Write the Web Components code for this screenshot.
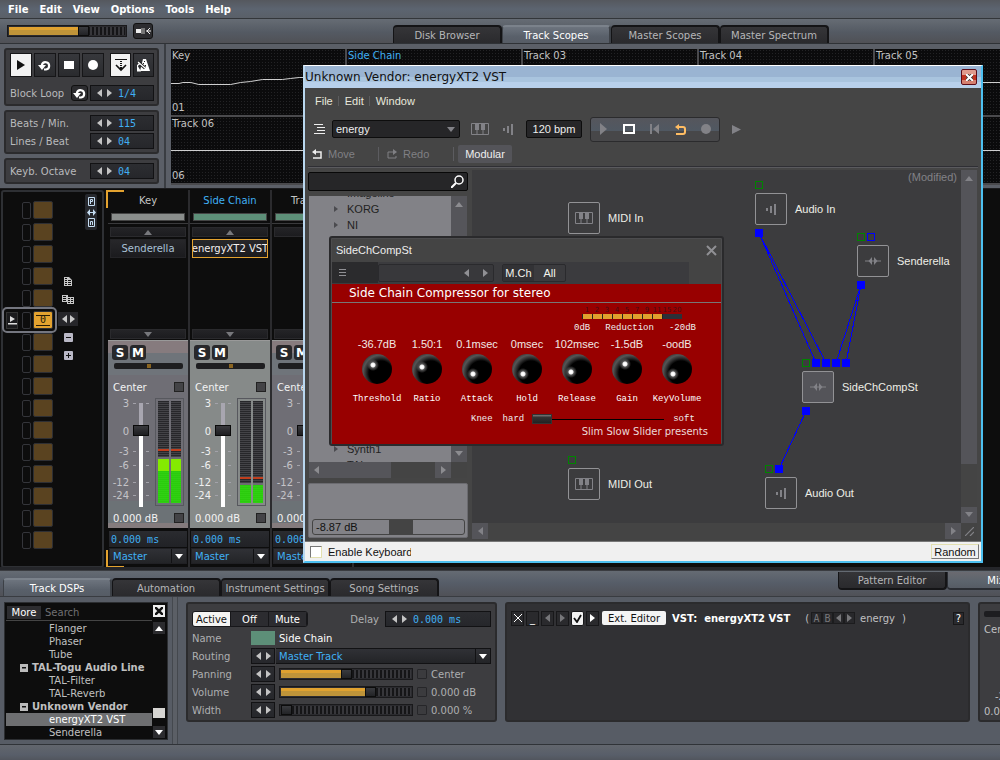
<!DOCTYPE html>
<html lang="en">
<head>
<meta charset="utf-8">
<title>Renoise</title>
<style>
  html, body { margin: 0; height: 100%; background: #545a62; overflow: hidden; }
</style>
</head>
<body>
<rn-app></rn-app>
<script>
const BASE = `
  :host { display: block; box-sizing: border-box; }
  * { box-sizing: border-box; }
  button, input, select { font: inherit; color: inherit; margin: 0; padding: 0; border: 0; background: none; border-radius: 0; min-width: 0; }
  button { display: flex; align-items: center; justify-content: center; white-space: nowrap; }
  select, input[type=range], input[type=checkbox] { appearance: none; -webkit-appearance: none; }
  ul { list-style: none; margin: 0; padding: 0; }
  svg { display: block; flex: none; }
  .row { display: flex; align-items: center; }
`;

function define(name, css, render) {
  customElements.define(name, class extends HTMLElement {
    constructor() { super(); this.attachShadow({ mode: 'open' }); }
    connectedCallback() {
      const a = (key, fallback = '') => this.getAttribute(key) ?? fallback;
      this.shadowRoot.innerHTML = `<style>${BASE}${css}</style>${render(a, this)}`;
    }
  });
}

const svg = (w, h, body, extra = '') =>
  `<svg width="${w}" height="${h}" viewBox="0 0 ${w} ${h}" fill="currentColor" aria-hidden="true" ${extra}>${body}</svg>`;

const ICON = {
  left: svg(5, 8, '<path d="M5 0v8L0 4z"/>'),
  right: svg(5, 8, '<path d="M0 0v8l5-4z"/>'),
  up: svg(8, 5, '<path d="M0 5h8L4 0z"/>'),
  down: svg(8, 5, '<path d="M0 0h8L4 5z"/>'),
  play: svg(8, 10, '<path d="M0 0v10l8-5z"/>'),
  loop: svg(14, 13, '<path d="M4 7V5.500A3.700 3.700 0 1 1 8 10.500H6" fill="none" stroke="currentColor" stroke-width="2.200"/><path d="M0 6h8L4 11z"/>'),
  stop: svg(10, 8, '<path d="M0 0h10v8H0z"/>'),
  rec: svg(10, 10, '<circle cx="5" cy="5" r="5"/>'),
  follow: svg(12, 13, '<path d="M0 0h12v1H0zM5 2h2v1H5zM5 4h2v1H5zM5 6h2v1H5z"/><path d="M1 6l5 5 5-5" fill="none" stroke="currentColor" stroke-width="1.600"/><path d="M5 8h2v3H5z"/>'),
  metro: svg(13, 13, '<path d="M6 0h3l4 12H3z"/><path d="M7 2h1v1H7zM6 4h1v1H6zM8 6h1v1H8zM7 8h1v1H7zM5 7h1v1H5z" fill="#222"/><path d="M1 3l7 6" stroke="#222" stroke-width="3"/><path d="M1 3l7 6M0 7l3-3M0 12V7l3 5z" stroke="currentColor" stroke-width="1.200"/>'),
  plug: svg(15, 8, '<path d="M0 2h5v4H0z"/><path d="M5 1h4v6H5z" fill="#777"/><path d="M14 1l-3 3 3 3M10 4h5" fill="none" stroke="currentColor"/>'),
  doc: svg(8, 9, '<path d="M0 0h5l3 3v6H0z"/><path d="M1 2h2M1 4h2M4 4h3M1 6h2M4 6h3M1 8h2M4 8h3" transform="translate(0 -.5)" stroke="#111" />'),
  docs: svg(12, 9, '<path d="M0 0h6v7H0zM5 2h7v7H5z"/><path d="M1 2h3M1 4h3M1 6h3M6 4h2M9 4h2M6 6h2M9 6h2M6 8h2M9 8h2" transform="translate(0 -.5)" stroke="#111"/>'),
  list: svg(11, 10, '<path d="M0 0h9v1H0zM3 3h8v1H3zM3 6h8v1H3zM0 9h11v1H0z"/>'),
  piano: svg(18, 12, '<path d="M.5.5h17v11H.500zM6 6v6M12 6v6" fill="none" stroke="currentColor"/><path d="M4 0h4v7H4zM10 0h4v7h-4z"/>'),
  bars: svg(11, 11, '<path d="M0 4h2v3H0zM4 2h2v7H4zM8 0h2v11H8z"/>'),
  fx: svg(16, 8, '<path d="M0 3.500h16v1H0z"/><path d="M7 0v8L3.500 4zM9 0v8l3.500-4z"/>'),
  undo: svg(10, 10, '<path d="M3 3h6v6H1" fill="none" stroke="currentColor" stroke-width="1.500"/><path d="M0 3l4-3v6z"/>'),
  redo: svg(10, 10, '<path d="M7 3H1v6h8V7" fill="none" stroke="currentColor"/><path d="M10 3L6 0v6z"/>'),
  lens: svg(13, 13, '<circle cx="8" cy="5" r="4" fill="none" stroke="currentColor" stroke-width="1.500"/><path d="M5 8l-5 5" stroke="currentColor" stroke-width="2"/>'),
};

/* ---------- shared controls ---------- */

define('rn-stepper', `
  :host { display: flex; align-items: center; height: 16px; background: linear-gradient(#2c2d31, #26272b); border: 1px solid #121214; color: #c4c4c4; }
  button { width: 10px; height: 14px; }
  .pair { display: flex; padding: 0 4px 0 3px; }
  input { flex: 1; width: 0; height: 14px; color: #40b0f4; font-family: "DejaVu Sans Mono", monospace; }
  :host([bare]) { width: 24px; flex: none; padding: 0; }
  :host([bare]) .pair { padding: 0 1px; }
`, a => `<span class="pair"><button aria-label="Previous">${ICON.left}</button><button aria-label="Next">${ICON.right}</button></span>${
  a('value') ? `<input type="text" value="${a('value')}" aria-label="${a('label')}">` : ''}`);

define('rn-slider', `
  :host { display: flex; height: 12px; border: 1px solid #19191b; background: #2b2b2f; padding: 1px; }
  input { width: 100%; height: 8px; background:
      linear-gradient(#e0a230 0 3px, #bf9439 3px) 0 0 / var(--fill) 8px no-repeat,
      repeating-linear-gradient(90deg, #151517 0 1px, #37373b 1px 3px, #151517 3px 4px); }
  input::-webkit-slider-thumb { -webkit-appearance: none; width: 11px; height: 10px; background: linear-gradient(#3a3b3f, #222326); border: 1px solid #0c0c0c; }
`, a => `<input type="range" value="${a('value', 0)}" aria-label="${a('label')}" style="--fill:${a('value', 0)}%">`);

define('rn-tabs', `
  :host { display: flex; overflow: hidden; }
  button { flex: none; width: 109px; height: 18px; color: #b5b6b8; background: linear-gradient(#353538, #2a2a2d); border: 1px solid #141416; border-width: 2px 2px 0 1px; border-radius: 4px 4px 0 0; }
  button[aria-selected=true] { color: #fff; background: linear-gradient(#6d747e, #59606a 60%, #565c65); border-color: #3c4046; border-top-color: #7b828b; }
  :host([bottom]) button { border-width: 0 2px 2px 1px; border-radius: 0 0 4px 4px; }
  :host([bottom]) button[aria-selected=true] { background: linear-gradient(#6a6a70, #5c646d 60%, #565c65); border-color: #2a2d33; }
`, a => a('items').split('|').map((t, i) => `<button role="tab" aria-selected="${i == a('active')}">${t}</button>`).join(''));

define('rn-panel', `
  :host { background: #3d3d40; border: 2px solid #2b2b2d; border-radius: 3px; min-width: 0; }
`, () => `<slot></slot>`);

define('rn-select', `
  :host { display: grid; align-items: center; height: 16px; color: #40b0f4; background: linear-gradient(#303136, #232427); border: 1px solid #121214; }
  select { grid-area: 1 / 1; width: 100%; height: 14px; padding-left: 3px; outline: none; }
  span { grid-area: 1 / 1; justify-self: end; width: 15px; height: 14px; display: flex; align-items: center; justify-content: center; border-left: 1px solid #121214; color: #fff; pointer-events: none; }
`, a => `<select aria-label="${a('label')}"><option>${a('value')}</option></select><span>${ICON.down}</span>`);

/* ---------- top ---------- */

define('rn-menubar', `
  :host { display: flex; gap: 11px; align-items: center; height: 19px; padding-left: 8px; font-weight: bold; color: #fff;
    background: linear-gradient(#55585e, #5c6470 50%, #5a6068); border-bottom: 1px solid #33363a; }
`, () => ['File', 'Edit', 'View', 'Options', 'Tools', 'Help'].map(t => `<button>${t}</button>`).join(''));

define('rn-toolbar', `
  :host { display: flex; align-items: center; height: 25px; padding-left: 7px; background: linear-gradient(#666c74, #545a63 55%, #505156); border-bottom: 1px solid #2f3236; }
  rn-slider { width: 120px; }
  .plug { width: 20px; height: 16px; margin-left: 6px; color: #eee; background: #2c2c2f; border: 1px solid #111; border-radius: 3px; }
  rn-tabs { margin: 0 0 0 240px; align-self: flex-end; }
`, () => `<rn-slider value="66" label="Main volume"></rn-slider><button class="plug" aria-label="Audio plug">${ICON.plug}</button>
  <rn-tabs items="Disk Browser|Track Scopes|Master Scopes|Master Spectrum" active="1"></rn-tabs>`);

define('rn-transport', `
  :host { display: flex; flex-direction: column; gap: 4px; width: 166px; padding: 4px 5px 4px 4px; border-right: 2px solid #3a3d42; color: #b9babc; }
  .keys { display: flex; gap: 2px; padding: 3px 0 0 4px; }
  .keys button { width: 22px; height: 24px; color: #fff; background: linear-gradient(#37383c, #2a2b2e); border: 1px solid #161618; }
  .keys .on { background: #f2f2f2; color: #111; }
  .keys .gap { margin-left: 4px; }
  .keys .nar { width: 21px; }
  .line { display: flex; align-items: center; height: 18px; padding-left: 4px; }
  .line span { flex: 1; }
  .block { height: 20px; margin-top: 6px; }
  rn-stepper { width: 64px; margin-right: 3px; }
  .lp { width: 17px; height: 16px; margin-right: 2px; background: #2c2c2f; border: 1px solid #111; border-radius: 3px; color: #fff; }
  rn-panel.b, rn-panel.c { padding: 2px 0; }
  rn-panel.a { height: 58px; }
`, () => `
  <rn-panel class="a"><div class="keys">
    <button class="on" aria-label="Play">${ICON.play}</button><button aria-label="Loop">${ICON.loop}</button><button aria-label="Stop">${ICON.stop}</button><button aria-label="Record">${ICON.rec}</button><button class="on gap nar" aria-label="Follow">${ICON.follow}</button><button class="nar" aria-label="Metronome">${ICON.metro}</button></div>
    <div class="line block"><span>Block Loop</span><button class="lp" aria-label="Block loop">${ICON.loop}</button><rn-stepper label="Block Loop" value="1/4"></rn-stepper></div></rn-panel>
  <rn-panel class="b"><div class="line"><span>Beats / Min.</span><rn-stepper label="Beats" value="115"></rn-stepper></div>
    <div class="line"><span>Lines / Beat</span><rn-stepper label="Lines" value="04"></rn-stepper></div></rn-panel>
  <rn-panel class="c"><div class="line"><span>Keyb. Octave</span><rn-stepper label="Octave" value="04"></rn-stepper></div></rn-panel>`);

define('rn-scope', `
  :host { position: relative; display: flex; flex-direction: column; justify-content: space-between; height: 66px; padding: 0 1px; color: #c3c3c3; overflow: hidden;
    background: radial-gradient(circle, #232325 0 1px, transparent 1px) 0 0 / 3px 3px #0b0b0c; line-height: 14px; }
  :host([selected]) { color: #40b0f4; }
  svg { position: absolute; inset: 0; width: 100%; height: 100%; }
`, a => `<span>${a('name')}</span><span>${a('index')}</span><svg viewBox="0 0 175 66" preserveAspectRatio="none" aria-hidden="true"><path d="${a('wave', 'M0 33.500H175')}" fill="none" stroke="#d0d0d0"/></svg>`);

define('rn-scopes', `
  :host { flex: 1; min-width: 0; overflow: hidden; display: grid; grid-template-columns: repeat(5, 174px); gap: 2px; background: #4a4a4d; margin: 5px 0 3px 5px; align-content: start; }
`, () => `
  <rn-scope name="Key" index="01" wave="M0 34.500h8l4-1h8l8 2h32l10-2 10-1 12-2h20l8-1 9-1h8l38-3"></rn-scope>
  <rn-scope name="Side Chain" selected></rn-scope><rn-scope name="Track 03"></rn-scope><rn-scope name="Track 04"></rn-scope><rn-scope name="Track 05"></rn-scope>
  <rn-scope name="Track 06" index="06"></rn-scope>${'<rn-scope></rn-scope>'.repeat(4)}`);

/* ---------- mixer ---------- */

define('rn-matrix', `
  :host { display: flex; width: 103px; height: 378px; margin: 1px 0 0 1px; padding: 0 0 0 3px; border: 2px solid #2e3034; border-radius: 3px; background: #0d0d0d; }
  .slots { display: grid; gap: 4px; padding-top: 9px; align-content: start; }
  .slot { display: grid; grid-template-columns: 14px 9px 20px; gap: 2px; height: 18px; align-items: center; }
  .slot i { height: 17px; border: 1px solid #34353a; border-radius: 2px; }
  .slot b { height: 18px; background: #5a4320; border: 1px solid #2e2f33; border-radius: 2px; font-weight: normal; color: #221a08; text-align: center; line-height: 16px; font-family: "DejaVu Sans Mono", monospace; }
  .slot .p { width: 12px; height: 17px; visibility: hidden; color: #ddd; background: #1b1b1d; border: 1px solid #333; }
  .on { outline: 2px solid #74767f; outline-offset: 2px; border-radius: 1px; }
  .on .p { visibility: visible; }
  .slot.on b { padding: 2px 1px; background: linear-gradient(#2a1d05, #2a1d05) 50% 3px / 14px 1px no-repeat, linear-gradient(#2a1d05, #2a1d05) 50% 13px / 14px 1px no-repeat, #e3a22f; line-height: 12px; }
  .tools { display: grid; grid-auto-rows: 18px; align-items: center; justify-items: center; align-content: start; padding-top: 80px; width: 24px; margin-left: 3px; color: #c8c8c8; }
  .tools button.lr { width: 20px; height: 14px; gap: 3px; background: #26262a; margin-top: 4px; }
  .tools .sq { width: 9px; height: 9px; background: #b9b8c6; color: #111; border-radius: 1px; margin-top: 4px; }
  .pm { display: grid; justify-items: center; width: 12px; height: 36px; padding: 3px 0; margin: 2px 0 0 5px; background: #26282d; color: #c5ddf2; border-radius: 2px; align-content: space-between; }
`, () => `<div class="slots">${Array.from({ length: 16 }, (_, i) =>
    `<div class="slot ${i == 5 ? 'on' : ''}"><button class="p" aria-label="Play slot">${svg(9, 9, '<path d="M2 0v6l5-3zM0 7h9v1.500H0z"/>')}</button><i></i><b>${i == 5 ? '0' : ''}</b></div>`).join('')}</div>
  <div class="tools"><button aria-label="Copy">${ICON.doc}</button><button aria-label="Duplicate">${ICON.docs}</button><button class="lr" aria-label="Move">${ICON.left}${ICON.right}</button>
    <button class="sq" aria-label="Remove">${svg(5, 1, '<path d="M0 0h5v1H0z"/>')}</button><button class="sq" aria-label="Add">${svg(5, 5, '<path d="M0 2h5v1H0zM2 0h1v5H2z"/>')}</button></div>
  <button class="pm" aria-label="Pattern or matrix">${svg(7, 9, '<path d="M.5.500h6v8h-6zM2.500 7V2.500h2v2h-2" fill="none" stroke="currentColor"/>')}${svg(9, 7, '<path d="M0 3.500L3 0v3h3V0l3 3.500L6 7V4H3v3z"/>')}${svg(7, 9, '<path d="M.5.500h6v8h-6zM2.500 7V3.500h2V7" fill="none" stroke="currentColor"/>')}</button>`);

define('rn-meter', `
  :host { display: flex; gap: 2px; width: 29px; height: 108px; padding: 2px; border: 1px solid #57585e; }
  i { position: relative; flex: 1; background:
    linear-gradient(#c03e1d, #c03e1d) 0 var(--peak) / 100% 2px no-repeat,
    linear-gradient(#6b6c70, #6b6c70) 0 calc(var(--level) - 2px) / 100% 2px no-repeat,
    linear-gradient(var(--hot), var(--hot)) 0 var(--level) / 100% var(--hoth) no-repeat,
    linear-gradient(transparent var(--level), #2cf406cc var(--level)),
    repeating-linear-gradient(#27272a 0 1px, #434347 1px 2px); }
`, a => `<i style="--peak:${a('peak')}px;--level:${a('level')}px;--hot:#84ea00;--hoth:${a('hot')}px"></i>`.repeat(2));

define('rn-track', `
  :host { width: 82px; border-right: 2px solid #2b2b2e; color: #b8b8ba; }
  .name { text-align: center; height: 23px; line-height: 22px; white-space: nowrap; color: #c4c4c4; }
  :host([selected]) .name { color: #40b0f4; }
  .color { height: 8px; margin: 0 3px; background: #8a8e8c; border: 1px solid #444; }
  .color.g { background: #5d8f78; }
  .head { height: 34px; border-bottom: 1px solid #3a3a3c; }
  .chain { padding: 3px 2px 0; height: 115px; display: flex; flex-direction: column; }
  .chain button { width: 100%; height: 10px; color: #77787c; background: linear-gradient(#242427, #1c1c1f); border: 1px solid #2a2a2d; }
  .chain .dev { height: 19px; margin-top: 2px; color: #a9c0d6; background: linear-gradient(#27272a, #1b1b1e); border: 1px solid #242427; overflow: hidden; }
  :host([selected]) .dev { color: #f4f0ee; border-color: #e3a22f; }
  .chain .last { margin-top: auto; }
  .body { margin-top: 1px; height: 188px; padding: 4px 4px 0 4px; color: #f3f3f3; background: linear-gradient(#867b7e 0 12px, #6f747a 12px 34px, #6f6e75 34px 160px, #6c7276 160px 182px, #847b7d 182px); border-top: 1px solid #999; }
  :host([selected]) .body { background: #868a89; }
  .sm { display: flex; gap: 2px; }
  .sm button { width: 16px; height: 15px; background: #28282b; border-radius: 3px; font: bold 12px "DejaVu Sans", sans-serif; color: #fff; }
  .pan { display: block; width: 69px; height: 6px; margin: 3px 0 0 2px; background: #1e1e20; border-radius: 2px; }
  .pan::-webkit-slider-thumb { -webkit-appearance: none; width: 4px; height: 4px; background: #8a6420; }
  .v { display: flex; align-items: center; justify-content: space-between; height: 14px; padding: 0 0 0 1px; }
  .v.c { margin-top: 11px; }
  .v.d { margin-top: 4px; }
  .v input { width: 10px; height: 10px; background: #434346; border: 1px solid #222; }
  .fader { display: flex; margin-top: 4px; height: 109px; }
  .scale { display: grid; width: 21px; grid-template-rows: 28px 20px 14px 17px 13px 12px; text-align: right; line-height: 12px; color: #c4c3c8; white-space: nowrap; justify-items: end; }
  .scale span { display: block; padding-right: 4px; height: 12px; }
  :host([selected]) .scale { color: #f0f0f0; }
  .fw { display: grid; margin-top: 5px; width: 16px; height: 104px; }
  .fw svg { grid-area: 1 / 1; color: #a3a2aa; }
  .fw input { grid-area: 1 / 1; display: block; writing-mode: vertical-lr; direction: rtl; width: 16px; height: 104px; background: linear-gradient(#a8a6b0 25%, #fff 25%) center / 4px 100% no-repeat; }
  .fw input::-webkit-slider-thumb { -webkit-appearance: none; width: 16px; height: 11px; background: linear-gradient(#39393d, #1d1d20); border: 1px solid #0a0a0a; }
  rn-meter { margin-left: auto; }
  .delay { display: block; width: 78px; height: 16px; margin: 3px 0 1px 1px; padding-left: 2px; color: #40b0f4; background: linear-gradient(#2a2b2f, #212226); font-family: "DejaVu Sans Mono", monospace; }
  rn-select { margin: 0 1px; border-color: #202024; }
`, a => `
  <div class="head"><div class="name">${a('name')}</div><div class="color ${a('tint')}"></div></div>
  <div class="chain"><button aria-label="Scroll up">${ICON.up}</button>${a('dev') ? `<button class="dev">${a('dev')}</button>` : ''}<button class="last" aria-label="Scroll down">${ICON.down}</button></div>
  <div class="body">
    <div class="sm"><button>S</button><button>M</button></div>
    <input class="pan" type="range" aria-label="Panning">
    <div class="v c"><span>Center</span><input type="checkbox" aria-label="Automate panning"></div>
    <div class="fader"><div class="scale"><span>3</span><span>0</span><span>-3</span><span>-6</span><span>-12</span><span>-24</span></div>
      <div class="fw">${svg(16, 104, [0, 28, 48, 62, 79, 92].map(y => `<path d="M0 ${y}h3v1H0zM13 ${y}h3v1h-3z"/>`).join(''))}<input type="range" value="76" aria-label="Volume"></div>
      <rn-meter peak="${a('peak')}" level="${a('level')}" hot="${a('hot')}"></rn-meter></div>
    <div class="v d"><span>0.000 dB</span><input type="checkbox" aria-label="Automate volume"></div>
  </div>
  <input class="delay" type="text" value="0.000 ms" aria-label="Delay"><rn-select value="Master" label="Output"></rn-select>`);

define('rn-mixer', `
  :host { display: flex; height: 382px; background: #0d0d0d; border-bottom: 3px solid #25262a; border-top: 1px solid #1c1c1e; overflow: hidden; }
  .tracks { display: flex; flex: none; margin-left: 2px; height: 378px; padding-left: 2px; margin-top: 1px; background:
    linear-gradient(#e3a22f, #e3a22f) 0 0 / 2px 18px no-repeat, linear-gradient(#e3a22f, #e3a22f) 0 0 / 18px 2px no-repeat,
    linear-gradient(#e3a22f, #e3a22f) 0 100% / 2px 18px no-repeat, linear-gradient(#e3a22f, #e3a22f) 0 100% / 18px 2px no-repeat; }
`, () => `<rn-matrix></rn-matrix><div class="tracks">
  <rn-track name="Key" dev="Senderella" peak="48" level="58" hot="12"></rn-track>
  <rn-track name="Side Chain" tint="g" dev="energyXT2 VST" selected peak="76" level="84" hot="0"></rn-track>
  <rn-track name="Track 03" tint="g" peak="90" level="100" hot="0"></rn-track></div>`);

/* ---------- lower section ---------- */

define('rn-browser', `
  :host { width: 164px; height: 138px; flex: none; display: grid; grid-template-rows: 17px 1fr; grid-template-columns: 1fr 14px; background: #0d0d0d; border: 1px solid #2c2e31; padding: 1px 1px 0; color: #c0c0c0; }
  .top { display: flex; align-items: center; border-bottom: 1px solid #444; }
  .top button { width: 34px; height: 13px; background: #2d2d30; color: #fff; margin-left: 1px; }
  .top input { width: 90px; margin-left: 4px; } .top input::placeholder { color: #707073; }
  .x { width: 12px; height: 12px; background: #eee; color: #111; margin: 1px 0 0 1px; }
  ul { overflow: hidden; padding-top: 1px; }
  li { height: 13px; line-height: 13px; padding-left: 43px; white-space: nowrap; }
  .g { display: flex; align-items: center; gap: 4px; padding-left: 14px; font-weight: bold; }
  .g svg { background: #bbb; color: #111; }
  .sel { background: #6e6f71; color: #fff; }
  .sb { display: flex; flex-direction: column; align-items: center; }
  .sb button { width: 12px; height: 12px; background: #2c2c2f; color: #fff; margin-top: 1px; }
  .sb i { width: 12px; height: 10px; background: #d6d5d2; margin: auto 0 7px; }
  .sb button:last-child { margin-bottom: 1px; }
`, () => {
  const box = svg(8, 8, '<path d="M2 3h4v1.500H2z"/>');
  return `<div class="top"><button>More</button><input type="text" placeholder="Search" aria-label="Search"></div>
  <button class="x" aria-label="Clear">${svg(8, 8, '<path d="M0 0l8 8M8 0L0 8" stroke="currentColor" stroke-width="2.500"/>')}</button>
  <ul><li>Flanger</li><li>Phaser</li><li>Tube</li><li class="g">${box}TAL-Togu Audio Line</li><li>TAL-Filter</li><li>TAL-Reverb</li><li class="g">${box}Unknown Vendor</li><li class="sel">energyXT2 VST</li><li>Senderella</li></ul>
  <div class="sb"><button aria-label="Up">${ICON.up}</button><i></i><button aria-label="Down">${ICON.down}</button></div>`;
});

define('rn-trackdsp', `
  :host { width: 311px; flex: none; color: #aeafb1; }
  rn-panel { height: 120px; padding: 5px 4px; }
  .grid { display: grid; grid-template-columns: 59px 1fr; grid-template-rows: 20px; grid-auto-rows: 18px; align-items: center; }
  .r { display: flex; align-items: center; height: 16px; gap: 4px; }
  .seg { display: flex; border: 1px solid #17171a; border-radius: 3px; overflow: hidden; }
  .seg button { width: 38px; height: 14px; color: #fff; background: #2c2c30; border-right: 1px solid #17171a; }
  .seg .on { background: #f4f4f2; color: #111; }
  .full { grid-column: 1 / -1; display: flex; align-items: center; }
  .full span { margin-left: auto; margin-right: 6px; }
  .full rn-stepper { width: 106px; }
  .sw { width: 24px; height: 14px; background: #5d8f78; }
  .nm { color: #fff; width: 120px; }
  .r.route { gap: 1px; }
  .route rn-select { flex: 1; border-left: 0; }
  rn-slider { width: 134px; }
  .r input[type=checkbox] { width: 10px; height: 10px; border: 1px solid #262629; background: #3b3b3e; border-radius: 1px; }
`, () => {
  const row = (n, v, t) => `<span>${n}</span><div class="r"><rn-stepper bare></rn-stepper><rn-slider value="${v}" label="${n}"></rn-slider><input type="checkbox" aria-label="Automate ${n}"><span>${t}</span></div>`;
  return `<rn-panel><div class="grid">
  <div class="full"><div class="seg"><button class="on">Active</button><button>Off</button><button>Mute</button></div><span>Delay</span><rn-stepper value="0.000 ms" label="Delay"></rn-stepper></div>
  <label for="nm">Name</label><div class="r"><i class="sw"></i><input class="nm" id="nm" type="text" value="Side Chain"></div>
  <span>Routing</span><div class="r route"><rn-stepper bare></rn-stepper><rn-select value="Master Track" label="Routing"></rn-select></div>
  ${row('Panning', 50, 'Center')}${row('Volume', 71, '0.000 dB')}${row('Width', 0, '0.000 %')}</div></rn-panel>`;
});

define('rn-device', `
  :host { flex: 1; min-width: 0; color: #c0c0c2; }
  rn-panel { height: 120px; background: #313134; padding: 5px 4px; }
  .row { gap: 2px; height: 18px; }
  .k { width: 13px; height: 15px; background: #2a2a2d; border: 1px solid #18181a; color: #fff; flex: none; }
  .dim { color: #77777a; }
  .on { background: #f2f2f2; color: #111; border-radius: 2px; }
  .ext { width: 64px; height: 14px; background: #f4f4f4; color: #111; border-radius: 2px; margin: 0 4px 0 1px; flex: none; }
  b { color: #fff; white-space: pre; }
  .ab { display: flex; margin-right: 3px; }
  .ab button { width: 11px; height: 12px; background: #28282b; border: 1px solid #1c1c1e; color: #77777a; font-family: "DejaVu Sans Mono", monospace; }
  .q { margin-left: auto; width: 11px; height: 13px; }
  .p { margin-left: 13px; }
`, () => `<rn-panel><div class="row">
  <button class="k" aria-label="Remove">${svg(8, 8, '<path d="M0 0l8 8M8 0L0 8" stroke="currentColor"/>')}</button><button class="k" aria-label="Minimise">_</button>
  <button class="k dim" aria-label="Left">${ICON.left}</button><button class="k dim" aria-label="Right">${ICON.right}</button>
  <button class="k on" aria-label="Enabled">${svg(9, 9, '<path d="M1 4l3 4 4-7" fill="none" stroke="currentColor" stroke-width="1.800"/>')}</button><button class="k" aria-label="Show">${ICON.right}</button>
  <button class="ext">Ext. Editor</button><b>VST:  energyXT2 VST</b><span class="p">(</span>
  <span class="ab"><button>A</button><button>B</button><button aria-label="Previous">${ICON.left}</button><button aria-label="Next">${ICON.right}</button></span><span>energy</span><span style="margin-left:5px">)</span>
  <button class="k q">?</button></div></rn-panel>`);

define('rn-lane', `
  :host { width: 22px; flex: none; overflow: hidden; }
  rn-panel { width: 120px; height: 120px; padding: 7px 0 0 4px; color: #c0c0c2; display: flex; flex-direction: column; }
  i { height: 6px; background: #1d1d20; border-radius: 2px; margin-right: 4px; }
  .c { margin-top: 7px; } .m { margin: auto 0 4px 11px; } .d { margin-bottom: 3px; }
`, () => `<rn-panel><i></i><span class="c">Center</span><span class="m">-24</span><span class="d">0.000 dB</span></rn-panel>`);

define('rn-lower', `
  .bar { display: flex; height: 27px; align-items: flex-end; padding-left: 3px; background: linear-gradient(#3a3c40 0 1px, #656b73 1px, #565d68 50%, #505157); border-bottom: 1px solid #393c41; }
  .right { align-self: flex-start; margin: 2px 0 0 auto; width: 162px; }
  .content { display: flex; padding: 5px 0 4px 4px; height: 148px; border-bottom: 1px solid #303338; background: linear-gradient(90deg, transparent 172px, #44484e 172px 173px, #5b5f66 173px 177px, #44484e 177px 178px, transparent 178px) 0 0 no-repeat #575c65; }
  rn-trackdsp { margin: 0 8px 0 18px; } rn-lane { margin-left: 8px; }
  .status { height: 20px; background: linear-gradient(#62666d, #585e69 50%, #4b4d52); }
`, () => `<div class="bar"><rn-tabs items="Track DSPs|Automation|Instrument Settings|Song Settings" active="0"></rn-tabs><rn-tabs class="right" bottom items="Pattern Editor|Mixer" active="1"></rn-tabs></div>
  <div class="content"><rn-browser></rn-browser><rn-trackdsp></rn-trackdsp><rn-device></rn-device><rn-lane></rn-lane></div><div class="status"></div>`);

/* ---------- plugin window ---------- */

define('xt-head', `
  :host { border-bottom: 1px solid #2f2f34; box-shadow: 0 1px #5a5a5e; height: 79px; margin: 0 3px; color: #e8e8dc; }
  .menu { display: flex; gap: 0; height: 26px; align-items: center; padding-left: 1px; }
  .menu button { padding: 0 5px 0 6px; border-right: 1px solid #5c5c5e; height: 10px; }
  .menu button:last-child { border: 0; }
  .tools { height: 30px; padding-left: 6px; color: #828287; }
  .sel { display: grid; width: 128px; height: 18px; align-items: center; background: #262628; border: 1px solid #0d0d0d; border-radius: 2px; margin: 0 11px 0 7px; }
  .sel select { grid-area: 1/1; padding-left: 3px; color: #eee; } .sel svg { grid-area: 1/1; justify-self: end; margin-right: 4px; pointer-events: none; }
  .bpm { width: 56px; height: 18px; background: #262628; border: 1px solid #0d0d0d; border-radius: 2px; color: #eee; text-align: center; margin: 0 8px 0 12px; }
  .tr { display: flex; width: 130px; height: 25px; border: 1px solid #2b2b2d; border-radius: 3px; background: linear-gradient(#55565c, #505862 55%, #474749 55%); }
  .tr button { flex: 1; }
  .hist { height: 20px; color: #808084; padding-left: 4px; }
  .hist button { gap: 6px; }
  .hist i { width: 1px; height: 14px; background: #5c5c60; }
  .hist .mod { width: 54px; height: 18px; background: #545459; color: #eee; margin-left: 4px; border-radius: 2px; }
`, () => `<div class="menu"><button>File</button><button>Edit</button><button>Window</button></div>
  <div class="tools row"><button style="color:#eee" aria-label="Panel">${ICON.list}</button><div class="sel"><select aria-label="Preset"><option>energy</option></select>${ICON.down}</div>
  ${ICON.piano}<span style="width:14px"></span>${ICON.bars}<input class="bpm" type="text" value="120 bpm" aria-label="Tempo">
  <div class="tr"><button aria-label="Play">${svg(7, 12, '<path d="M0 0v12l7-6z"/>')}</button><button aria-label="Stop" style="color:#fff">${svg(12, 10, '<path d="M1 1h10v8H1z" fill="none" stroke="currentColor" stroke-width="2"/>')}</button><button aria-label="Rewind">${svg(9, 10, '<path d="M0 0h2v10H0zM9 0v10L3 5z"/>')}</button><button aria-label="Loop" style="color:#ffbd63">${svg(11, 11, '<path d="M3 3h5q2 0 2 2v3q0 2-2 2H1" fill="none" stroke="currentColor" stroke-width="2"/><path d="M0 3l4-3v6z"/>')}</button><button aria-label="Record">${ICON.rec}</button></div>
  <button style="margin-left:12px" aria-label="Forward">${svg(10, 9, '<path d="M0 0l9 4.500L0 9z"/>')}</button></div>
  <div class="hist row"><button style="width:66px;justify-content:flex-start"><span style="color:#eee">${ICON.undo}</span>Move</button><i></i><button style="width:74px;justify-content:flex-start;padding-left:8px">${ICON.redo}Redo</button><i></i><button class="mod">Modular</button></div>`);

define('xt-side', `
  :host { width: 160px; flex: none; display: flex; flex-direction: column; color: #111; }
  .search { display: flex; align-items: center; height: 19px; background: #262628; border: 1px solid #080808; border-radius: 2px; padding: 0 3px; color: #fff; }
  .search input { flex: 1; color: #eee; }
  .mid { display: grid; grid-template-columns: 142px 16px; grid-template-rows: 266px 16px; margin: 5px 1px 5px; background: #828287; }
  ul { height: 266px; overflow: hidden; display: flex; flex-direction: column; justify-content: space-between; }
  li.t { margin-top: -11px; } li.e { margin-top: 208px; }
  li { flex: none; height: 16px; line-height: 16px; margin-left: 25px; display: flex; align-items: center; gap: 9px; color: #222; }
  ul { justify-content: flex-start; }
  li svg { color: #4b4b4f; }
  .v, .h { display: flex; justify-content: space-between; align-items: center; background: #55555a; color: #8c8c90; }
  .v { flex-direction: column; background: #55555a; padding: 6px 0; }
  .h { padding: 0 5px; background: linear-gradient(90deg, #55555a 82px, #444 82px 126px, #55555a 126px); }
  .c { background: #444; }
  .out { height: 55px; background: #828287; border: 1px solid #6b6b70; border-radius: 2px; padding: 0 2px 2px 3px; display: flex; align-items: flex-end; }
  .lv { display: flex; align-items: center; width: 100%; height: 16px; border: 1px solid #444; border-radius: 3px; padding-left: 3px; background: linear-gradient(90deg, transparent 76px, #444 76px 100px, transparent 100px); }
`, () => {
  const it = (n, c = '') => `<li class="${c}">${svg(4, 6, '<path d="M0 0v6l4-3z"/>')}${n}</li>`;
  return `<div class="search"><input type="text" aria-label="Search">${ICON.lens}</div>
  <div class="mid"><ul>${it('Imageline', 't')}${it('KORG')}${it('NI')}${it('Synth1', 'e')}${it('TAL')}</ul>
  <div class="v">${ICON.up}${ICON.down}</div><div class="h">${ICON.left}${ICON.right}</div><div class="c"></div></div>
  <div class="out"><div class="lv">-8.87 dB</div></div>`;
});

define('xt-node', `
  :host { position: absolute; left: var(--x); top: var(--y); display: grid; gap: 4px; grid-template-rows: 8px 32px 8px; color: #eeeee6; }
  .ports { display: flex; gap: 2px; }
  .ports i { width: 8px; height: 8px; border: 1px solid #008400; }
  .ports .b { border-color: #0000ff; } .ports .f { border-color: #0000ff; background: #0000ff; }
  .main { display: flex; align-items: center; gap: 8px; white-space: nowrap; }
  .box { width: 32px; height: 32px; border: 1px solid #929295; border-radius: 2px; color: #828287; display: grid; place-items: center; }
  :host([selected]) .box { background: #545459; }
`, a => {
  const p = s => `<div class="ports">${[...s].map(c => `<i class="${c}"></i>`).join('')}</div>`;
  return `${p(a('in'))}<div class="main"><span class="box">${ICON[a('icon')]}</span><slot></slot></div>${p(a('out'))}`;
});

define('xt-graph', `
  :host { flex: 1; min-width: 0; display: grid; grid-template-columns: 1fr 16px; grid-template-rows: 353px 16px; margin-left: 4px; color: #828287; background: #444; }
  .area { position: relative; background: #3c3c3e; overflow: hidden; }
  .area > svg { position: absolute; left: 0; top: 0; }
  .mod { position: absolute; right: 4px; top: 1px; }
  .v { display: flex; flex-direction: column; justify-content: space-between; align-items: center; padding: 6px 0 6px; background: linear-gradient(#545459 294px, #444 294px 337px, #545459 337px); }
  .h { display: flex; justify-content: space-between; }
  .h span { width: 16px; height: 16px; background: #545459; display: grid; place-items: center; }
  .z { display: grid; place-items: center; }
`, () => `<div class="area">
  ${svg(489, 353, '<path d="M287 63L344 193M287 63L354 193M389 115L364 193M389 115L374 193M334 241L307 299" stroke="#0000ff" fill="none" shape-rendering="crispEdges"/>')}
  <xt-node style="--x:96px;--y:20px" icon="piano">MIDI In</xt-node>
  <xt-node style="--x:283px;--y:11px" icon="bars" in="g" out="f">Audio In</xt-node>
  <xt-node style="--x:385px;--y:63px" icon="fx" in="gb" out="f">Senderella</xt-node>
  <xt-node style="--x:330px;--y:189px" icon="fx" in="gffff" out="f" selected>SideChCompSt</xt-node>
  <xt-node style="--x:293px;--y:295px" icon="bars" in="gf">Audio Out</xt-node>
  <xt-node style="--x:96px;--y:286px" icon="piano" in="g">MIDI Out</xt-node>
  <span class="mod">(Modified)</span></div>
  <div class="v">${ICON.up}${ICON.down}</div><div class="h"><span>${ICON.left}</span><span>${ICON.right}</span></div><div class="z">${svg(9, 9, '<path d="M0 9l9-9M5 9l4-4" stroke="currentColor" stroke-width="1.200"/>')}</div>`);

define('xt-knob', `
  :host { display: grid; justify-items: center; width: 50px; white-space: nowrap; }
  .val { height: 14px; line-height: 14px; margin-bottom: 3px; color: #f2e8e4; }
  input { width: 30px; height: 30px; border-radius: 50%; background:
    radial-gradient(circle at var(--p), #fff 0 1px, #eee 2px, #555 3px, transparent 6px),
    radial-gradient(circle at 19px 19px, #000 0 12px, #2c2c2c 15px, #555 18px, #222 24px); }
  input::-webkit-slider-thumb { -webkit-appearance: none; width: 1px; height: 1px; }
  label { margin-top: 9px; font: 9px/12px "Liberation Mono", monospace; color: #fff; }
`, a => `<span class="val">${a('value')}</span><input id="k" type="range" style="--p:${a('dot')}"><label for="k">${a('name')}</label>`);

define('xt-compressor', `
  :host { position: absolute; left: 24px; top: 170px; width: 395px; background: #444; border: 2px solid #2a2a2c; border-radius: 3px; padding: 0 1px; color: #eee; box-shadow: inset 0 0 0 1px #4c4c4e; }
  .title { display: flex; align-items: center; justify-content: space-between; height: 24px; padding: 0 4px 0 4px; }
  .title button { color: #909094; }
  .strip { display: flex; height: 22px; align-items: center; background: linear-gradient(90deg, #3b3b3e 357px, #444 357px); color: #909094; padding-bottom: 1px; }
  .m { width: 46px; height: 21px; background: #2b2b2d; justify-content: flex-start; padding-left: 7px; }
  .prog { display: flex; justify-content: flex-end; align-items: center; gap: 14px; width: 116px; height: 18px; border: 1px solid #2a2a2d; border-radius: 2px; padding-right: 5px; background: #38383b; }
  .ch { display: flex; margin-left: 8px; width: 64px; height: 18px; border: 1px solid #2a2a2d; border-radius: 2px; color: #f4f4ee; }
  .ch button { width: 32px; } .ch .on { background: #323235; }
  .red { background: #980000; height: 160px; }
  h2 { margin: 0; height: 19px; padding-left: 17px; font: 12px/19px "DejaVu Sans", sans-serif; color: #fff; border-bottom: 1px solid #777; }
  .meter { width: 100px; margin: 4px 0 0 250px; }
  .dig { display: grid; grid-template-columns: repeat(10, 10px); font: 7px/7px "DejaVu Sans", sans-serif; color: #451014; text-align: center; }
  .led { height: 5px; background: linear-gradient(90deg, transparent 81px, #2c3038 81px), repeating-linear-gradient(90deg, #222 0 1px, #e0a02e 1px 10px); }
  .lab { display: flex; justify-content: space-between; width: 122px; margin: 4px 0 0 242px; font: 9px/10px "Liberation Mono", monospace; }
  .knobs { display: flex; margin: 4px 0 0 20px; }
  .knee { display: flex; align-items: center; height: 14px; margin: 7px 0 0 139px; font: 9px/12px "Liberation Mono", monospace; }
  .knee input { width: 132px; height: 10px; margin: 0 9px 0 8px; background: linear-gradient(#000, #000) center / 100% 1px no-repeat; }
  .knee input::-webkit-slider-thumb { -webkit-appearance: none; width: 20px; height: 10px; background: linear-gradient(#7a7a7a, #333 30%, #222); border: 1px solid #333; }
  .by { text-align: right; padding-right: 13px; font: 10px/12px "DejaVu Sans", sans-serif; color: #ecd8d8; }
`, () => `<div class="title"><span>SideChCompSt</span><button aria-label="Close">${svg(11, 11, '<path d="M1 1l9 9M10 1l-9 9" stroke="currentColor" stroke-width="2"/>')}</button></div>
  <div class="strip"><button class="m" aria-label="Menu">${svg(7, 7, '<path d="M0 0h7v1H0zM0 3h7v1H0zM0 6h7v1H0z"/>')}</button><div class="prog">${ICON.left}${ICON.right}</div><div class="ch"><button class="on">M.Ch</button><button>All</button></div></div>
  <div class="red"><h2>Side Chain Compressor for stereo</h2>
  <div class="meter"><div class="dig">${[1, 2, 3, 4, 5, 7, 9, 11, 15, 20].map(n => `<span>${n}</span>`).join('')}</div><div class="led"></div></div>
  <div class="lab"><span>0dB</span><span>Reduction</span><span>-20dB</span></div>
  <div class="knobs"><xt-knob value="-36.7dB" name="Threshold" dot="11px 11px"></xt-knob><xt-knob value="1.50:1" name="Ratio" dot="10px 13px"></xt-knob><xt-knob value="0.1msec" name="Attack" dot="11px 20px"></xt-knob><xt-knob value="0msec" name="Hold" dot="11px 20px"></xt-knob><xt-knob value="102msec" name="Release" dot="9px 18px"></xt-knob><xt-knob value="-1.5dB" name="Gain" dot="13px 10px"></xt-knob><xt-knob value="-oodB" name="KeyVolume" dot="11px 20px"></xt-knob></div>
  <div class="knee"><label for="knee">Knee</label><span style="margin-left:10px">hard</span><input id="knee" type="range" value="0"><span>soft</span></div>
  <div class="by">Slim Slow Slider presents</div></div>`);

define('xt-window', `
  :host { position: absolute; left: 303px; right: 17px; top: 65px; background: #454545; border: 2px solid #b9d7ef; border-top: 1px solid #fff; border-right-color: #4dc0f0; border-bottom-color: #4dc0f0; font: 11px "Liberation Sans", sans-serif; }
  .title { display: flex; align-items: center; justify-content: space-between; height: 22px; padding-right: 4px; font: 12px "DejaVu Sans", sans-serif; color: #111; background: linear-gradient(#9ab4d2 50%, #a9c4de 50% 75%, #b8d0eb 75%); }
  .title button { width: 16px; height: 16px; color: #fff; background: linear-gradient(#df9a8c 35%, #bf3320 35% 70%, #d68070 70%); border: 1px solid #5c0c18; border-radius: 2px; }
  .body { display: flex; height: 373px; padding: 3px 4px 0 3px; }
  xt-side { margin-top: 2px; }
  .foot { display: flex; align-items: center; justify-content: space-between; height: 20px; margin-top: 1px; padding: 0 2px 0 5px; background: #f0f0f0; color: #111; border-top: 1px solid #777; }
  .foot label { display: flex; align-items: center; gap: 6px; }
  .foot label span { width: 83px; overflow: hidden; white-space: nowrap; }
  .foot input { width: 12px; height: 12px; background: #fff; border: 1px solid #777; border-right-color: #e3e0b0; border-bottom-color: #e3e0b0; }
  .foot button { width: 48px; height: 15px; border: 1px solid; border-color: #e3e0b0 #777 #777 #e3e0b0; }
`, () => `<div class="title"><span>Unknown Vendor: energyXT2 VST</span><button aria-label="Close">${svg(7, 7, '<path d="M0 0l7 7M7 0L0 7" stroke="#333" stroke-width="3.500"/><path d="M0 0l7 7M7 0L0 7" stroke="currentColor" stroke-width="2"/>')}</button></div>
  <xt-head></xt-head><div class="body"><xt-side></xt-side><xt-graph></xt-graph></div>
  <div class="foot"><label><input type="checkbox"><span>Enable Keyboard</span></label><button>Random</button></div><xt-compressor></xt-compressor>`);

define('rn-app', `
  :host { position: relative; font: 10px "DejaVu Sans", sans-serif; background: #545a62; overflow: hidden; }
  .top { display: flex; height: 144px; background: #5b5f67; }
`, () => `<rn-menubar></rn-menubar><rn-toolbar></rn-toolbar><div class="top"><rn-transport></rn-transport><rn-scopes></rn-scopes></div>
  <rn-mixer></rn-mixer><rn-lower></rn-lower><xt-window></xt-window>`);
</script>
</body>
</html>
